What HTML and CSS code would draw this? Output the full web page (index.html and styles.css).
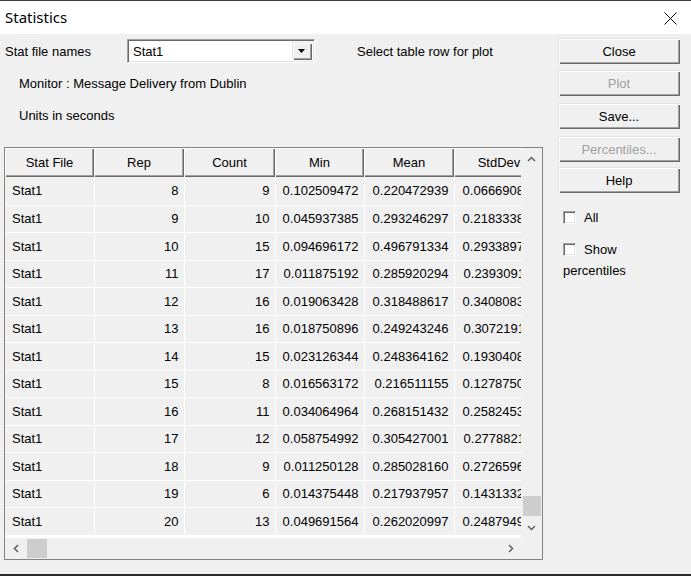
FILE: index.html
```html
<!DOCTYPE html>
<html>
<head>
<meta charset="utf-8">
<link rel="stylesheet" href="styles.css">
</head>
<body>
<div class="window">
  <div class="titlebar">
    <span class="title">Statistics</span>
    <svg class="close-x" width="13" height="13" viewBox="0 0 13 13"><path d="M0.5 0.5 L12.5 12.5 M12.5 0.5 L0.5 12.5" stroke="#000" stroke-width="1" fill="none"/></svg>
  </div>
  <div class="body">
    <div class="main">
      <div class="row1">
        <span class="lbl">Stat file names</span>
        <div class="combo">
          <span class="combo-text">Stat1</span>
          <span class="combo-btn"><svg width="8" height="5" viewBox="0 0 8 5"><path d="M0 0 H7 L3.5 4 Z" fill="#000"/></svg></span>
        </div>
        <span class="hint">Select table row for plot</span>
      </div>
      <div class="line monitor">Monitor : Message Delivery from Dublin</div>
      <div class="line units">Units in seconds</div>
      <div class="list">
        <div class="viewport">
          <table class="grid">
            <colgroup><col class="c1"><col class="c2"><col class="c3"><col class="c4"><col class="c5"><col class="c6"></colgroup>
            <thead>
              <tr><th>Stat File</th><th>Rep</th><th>Count</th><th>Min</th><th>Mean</th><th>StdDev</th></tr>
            </thead>
            <tbody>
              <tr><td class="l">Stat1</td><td>8</td><td>9</td><td>0.102509472</td><td>0.220472939</td><td>0.066690812</td></tr>
              <tr><td class="l">Stat1</td><td>9</td><td>10</td><td>0.045937385</td><td>0.293246297</td><td>0.218333812</td></tr>
              <tr><td class="l">Stat1</td><td>10</td><td>15</td><td>0.094696172</td><td>0.496791334</td><td>0.293389712</td></tr>
              <tr><td class="l">Stat1</td><td>11</td><td>17</td><td>0.011875192</td><td>0.285920294</td><td>0.239309112</td></tr>
              <tr><td class="l">Stat1</td><td>12</td><td>16</td><td>0.019063428</td><td>0.318488617</td><td>0.340808312</td></tr>
              <tr><td class="l">Stat1</td><td>13</td><td>16</td><td>0.018750896</td><td>0.249243246</td><td>0.307219112</td></tr>
              <tr><td class="l">Stat1</td><td>14</td><td>15</td><td>0.023126344</td><td>0.248364162</td><td>0.193040812</td></tr>
              <tr><td class="l">Stat1</td><td>15</td><td>8</td><td>0.016563172</td><td>0.216511155</td><td>0.127875012</td></tr>
              <tr><td class="l">Stat1</td><td>16</td><td>11</td><td>0.034064964</td><td>0.268151432</td><td>0.258245312</td></tr>
              <tr><td class="l">Stat1</td><td>17</td><td>12</td><td>0.058754992</td><td>0.305427001</td><td>0.277882112</td></tr>
              <tr><td class="l">Stat1</td><td>18</td><td>9</td><td>0.011250128</td><td>0.285028160</td><td>0.272659612</td></tr>
              <tr><td class="l">Stat1</td><td>19</td><td>6</td><td>0.014375448</td><td>0.217937957</td><td>0.143133212</td></tr>
              <tr><td class="l">Stat1</td><td>20</td><td>13</td><td>0.049691564</td><td>0.262020997</td><td>0.248794912</td></tr>
            </tbody>
          </table>
        </div>
        <div class="vscroll">
          <span class="arrow-v"><svg width="9" height="6" viewBox="0 0 9 6"><polyline points="1,5 4.5,1.5 8,5" fill="none" stroke="#606060" stroke-width="1.5"/></svg></span>
          <span class="spacer"></span>
          <span class="thumb-v"></span>
          <span class="arrow-v down"><svg width="9" height="6" viewBox="0 0 9 6"><polyline points="1,1 4.5,4.5 8,1" fill="none" stroke="#606060" stroke-width="1.5"/></svg></span>
        </div>
        <div class="hscroll">
          <span class="arrow-h"><svg width="6" height="9" viewBox="0 0 6 9"><polyline points="5,1 1.5,4.5 5,8" fill="none" stroke="#606060" stroke-width="1.5"/></svg></span>
          <span class="thumb-h"></span>
          <span class="spacer"></span>
          <span class="arrow-h"><svg width="6" height="9" viewBox="0 0 6 9"><polyline points="1,1 4.5,4.5 1,8" fill="none" stroke="#606060" stroke-width="1.5"/></svg></span>
        </div>
        <div class="corner"></div>
      </div>
    </div>
    <div class="side">
      <button class="btn b-close">Close</button>
      <button class="btn disabled">Plot</button>
      <button class="btn">Save...</button>
      <button class="btn disabled">Percentiles...</button>
      <button class="btn b-help">Help</button>
      <div class="check c-all"><span class="box"></span><span>All</span></div>
      <div class="check c-show"><span class="box"></span><span>Show</span></div>
      <div class="check-sub">percentiles</div>
    </div>
  </div>
</div>
</body>
</html>
```
FILE: styles.css
```css
html, body {
  margin: 0;
  padding: 0;
}
body {
  width: 691px;
  height: 576px;
  overflow: hidden;
  font-family: "Liberation Sans", Arial, sans-serif;
  font-size: 13px;
  color: #000;
}
.window {
  width: 691px;
  height: 576px;
  display: flex;
  flex-direction: column;
  background: #f0f0f0;
  border-top: 1px solid #3c3c3c;
  border-bottom: 2px solid #2b2b2b;
  box-sizing: border-box;
}
.titlebar {
  height: 33px;
  flex: none;
  background: #fff;
  display: flex;
  align-items: center;
  justify-content: space-between;
  padding: 0 14px 0 5px;
}
.title {
  font-family: "Noto Sans", "Open Sans", sans-serif;
  font-size: 15px;
  line-height: 20px;
  margin-top: -1px;
}
.close-x {
  display: block;
  margin-top: 2px;
}
.body {
  flex: 1;
  display: flex;
}
.main {
  width: 558px;
  flex: none;
  padding-top: 5px;
  box-sizing: border-box;
}
.row1 {
  display: flex;
  align-items: center;
  height: 24px;
}
.lbl {
  width: 122px;
  padding-left: 5px;
  box-sizing: content-box;
  flex: none;
}
.combo {
  width: 188px;
  height: 24px;
  box-sizing: border-box;
  background: #fff;
  border-top: 1px solid #a0a0a0;
  border-left: 1px solid #a0a0a0;
  border-right: 1px solid #fff;
  border-bottom: 1px solid #fff;
  box-shadow: inset 1px 1px 0 #696969, inset -1px -1px 0 #e3e3e3;
  display: flex;
  align-items: center;
  justify-content: space-between;
  padding: 2px 2px 2px 5px;
  flex: none;
}
.combo-btn {
  width: 20px;
  height: 18px;
  box-sizing: border-box;
  background: #f0f0f0;
  box-shadow: inset 1px 1px 0 #e3e3e3, inset 2px 2px 0 #fff, inset -1px -1px 0 #696969, inset -2px -2px 0 #a0a0a0;
  display: flex;
  align-items: center;
  justify-content: center;
}
.combo-btn svg {
  display: block;
}
.hint {
  margin-left: 42px;
}
.line {
  height: 16px;
  line-height: 16px;
  padding-left: 19px;
}
.monitor {
  margin-top: 13px;
}
.units {
  margin-top: 16px;
}
.list {
  margin-top: 23px;
  margin-left: 4px;
  width: 539px;
  height: 413px;
  box-sizing: border-box;
  border: 1px solid #828282;
  display: grid;
  grid-template-columns: 516px 21px;
  grid-template-rows: 390px 21px;
}
.viewport {
  overflow: hidden;
  background: #fff;
}
.grid {
  table-layout: fixed;
  width: 539px;
  border-collapse: collapse;
  border-spacing: 0;
}
.c1 { width: 89px; }
.c2 { width: 90px; }
.c3 { width: 91px; }
.c4 { width: 89px; }
.c5 { width: 90px; }
.c6 { width: 90px; }
.grid th {
  height: 29px;
  padding: 0;
  box-sizing: border-box;
  font-weight: normal;
  text-align: center;
  background: #f0f0f0;
  box-shadow: inset 1px 1px 0 #fff, inset -1px -1px 0 #696969, inset -2px -2px 0 #a0a0a0;
  white-space: nowrap;
  overflow: hidden;
}
.grid td {
  padding: 0 5px 0 0;
  text-align: right;
  background: #f0f0f0;
  border-right: 1px solid #fff;
  border-bottom: 1px solid #fff;
  white-space: nowrap;
  overflow: hidden;
  box-sizing: border-box;
}
.grid td.l {
  text-align: left;
  padding: 0 0 0 7px;
}
.grid tbody tr:nth-child(odd) td {
  height: 28px;
}
.grid tbody tr:nth-child(even) td {
  height: 27px;
}
.vscroll {
  display: flex;
  flex-direction: column;
  background: #f0f0f0;
}
.arrow-v {
  height: 21px;
  display: flex;
  align-items: center;
  justify-content: center;
  flex: none;
}
.arrow-v.down {
  height: 20px;
}
.spacer {
  flex: 1;
}
.thumb-v {
  height: 20px;
  margin: 0 1px 2px 2px;
  background: #cdcdcd;
  flex: none;
}
.hscroll {
  display: flex;
  align-items: stretch;
  background: #f0f0f0;
}
.arrow-h {
  width: 21px;
  display: flex;
  align-items: center;
  justify-content: center;
  flex: none;
}
.thumb-h {
  width: 20px;
  margin: 1px 0 1px 1px;
  background: #cdcdcd;
  flex: none;
}
.corner {
  background: #f0f0f0;
}
.side {
  width: 122px;
  flex: none;
  display: flex;
  flex-direction: column;
  padding-top: 4px;
}
.btn {
  width: 122px;
  height: 26px;
  margin: 0 0 7px 0;
  padding: 0;
  font-family: "Liberation Sans", Arial, sans-serif;
  font-size: 13px;
  color: #000;
  background: #f0f0f0;
  border: none;
  border-radius: 0;
  box-shadow: inset 1px 1px 0 #e3e3e3, inset 2px 2px 0 #fff, inset -1px -1px 0 #696969, inset -2px -2px 0 #a0a0a0;
  text-align: center;
}
.btn.disabled {
  color: #a0a0a0;
}
.b-close {
  margin-bottom: 6px;
}
.b-help {
  margin-top: -2px;
}
.check {
  display: flex;
  align-items: center;
  height: 16px;
  padding-left: 5px;
}
.check .box {
  width: 13px;
  height: 13px;
  box-sizing: border-box;
  background: #fff;
  border-top: 1px solid #a0a0a0;
  border-left: 1px solid #a0a0a0;
  border-right: 1px solid #fff;
  border-bottom: 1px solid #fff;
  box-shadow: inset 1px 1px 0 #696969, inset -1px -1px 0 #e3e3e3;
  margin-right: 8px;
}
.c-all {
  margin-top: 9px;
}
.c-show {
  margin-top: 16px;
}
.check-sub {
  padding-left: 5px;
  margin-top: 6px;
  line-height: 16px;
}
```
